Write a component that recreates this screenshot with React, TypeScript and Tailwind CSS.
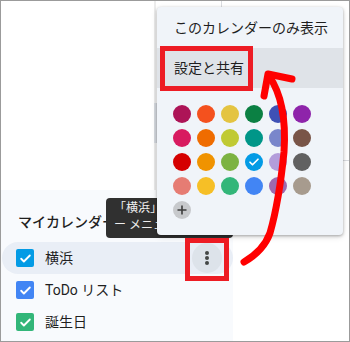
const FONT = 'font-["Roboto","Noto_Sans_CJK_JP",sans-serif]'

const SWATCHES = [
  ['#ad1457', '#f4511e', '#e4c441', '#0b8043', '#3f51b5', '#8e24aa'],
  ['#d81b60', '#ef6c00', '#c0ca33', '#009688', '#7986cb', '#795548'],
  ['#d50000', '#f09300', '#7cb342', '#039be5', '#b39ddb', '#616161'],
  ['#e67c73', '#f6bf26', '#33b679', '#4285f4', '#9e69af', '#a79b8e']
]

const CALENDARS = [
  { name: '横浜', color: '#039be5', active: true },
  { name: 'ToDo リスト', color: '#4285f4', active: false },
  { name: '誕生日', color: '#33b679', active: false }
]

function Check({ size = 12 }: { size?: number }) {
  return (
    <svg width={size} height={size} viewBox="0 0 24 24" fill="none">
      <path d="M4 12.5l5 5L20 6.5" stroke="white" strokeWidth="3.4" strokeLinecap="round" strokeLinejoin="round" />
    </svg>
  )
}

function ColorMenu() {
  return (
    <div className="absolute left-[156px] top-[6px] z-20 flex h-[228px] w-[186px] flex-col rounded-[4px] bg-[#f0f4f9] shadow-[0_1px_3px_rgba(0,0,0,0.3),0_2px_6px_rgba(0,0,0,0.12)]">
      <div className="flex h-[41px] items-center pl-[17px] pt-[1px] text-[14px] text-[#1f1f1f]">
        このカレンダーのみ表示
      </div>
      <div className="flex h-[40px] items-center bg-[#dfe3e8] pl-[17px] text-[14px] text-[#1f1f1f]">設定と共有</div>
      <div className="mt-[17px] flex flex-col gap-[6px] pl-[16px]">
        {SWATCHES.map((row, r) => (
          <div key={r} className="flex gap-[6px]">
            {row.map((c) => (
              <div
                key={c}
                className="flex h-[18px] w-[18px] items-center justify-center rounded-full"
                style={{ backgroundColor: c }}
              >
                {c === '#039be5' && <Check />}
              </div>
            ))}
          </div>
        ))}
        <div className="flex h-[18px] w-[18px] items-center justify-center rounded-full bg-[#c7c9cc]">
          <svg width="12" height="12" viewBox="0 0 12 12">
            <path d="M6 1.5v9M1.5 6h9" stroke="#3c3c3c" strokeWidth="1.6" />
          </svg>
        </div>
      </div>
    </div>
  )
}

export default function App() {
  return (
    <div className={`relative flex h-[342px] w-[350px] flex-col overflow-hidden border border-[#9b9b9b] bg-white ${FONT}`}>
      {/* calendar grid peeking out behind the menu */}
      <div className="absolute left-[153px] top-0 h-[189px] w-[2px] bg-[#ececec]" />
      <div className="absolute left-[153px] top-[102px] h-[40px] w-[3px] bg-[#d6dae0]" />
      <div className="absolute left-[220px] top-0 h-[8px] w-px bg-[#dadce0]" />
      <div className="absolute left-[340px] top-[159px] h-px w-[10px] bg-[#dadce0]" />

      <div className="h-[189px] shrink-0" />

      <div className="flex w-[232px] flex-1 flex-col bg-[#f8fafd]">
        <div className="mt-[22px] h-[20px] pl-[17px] text-[14px] font-medium leading-[20px] text-[#1f1f1f]">
          マイカレンダー
        </div>
        <div className="mt-[10px] flex flex-col">
          {CALENDARS.map((cal) => (
            <div
              key={cal.name}
              className={`ml-px flex h-[32px] items-center rounded-full pl-[14px] ${cal.active ? 'bg-[#e9eef6]' : ''}`}
            >
              <div
                className="flex h-[18px] w-[18px] items-center justify-center rounded-[2px]"
                style={{ backgroundColor: cal.color }}
              >
                <Check size={13} />
              </div>
              <span className="ml-[11px] text-[14px] text-[#1f1f1f]">{cal.name}</span>
              {cal.active && (
                <div className="ml-auto mr-[11px] flex h-[30px] w-[30px] flex-col items-center justify-center gap-px rounded-full bg-[#dde3ea]">
                  <span className="h-[4px] w-[4px] rounded-full bg-[#444746]" />
                  <span className="h-[4px] w-[4px] rounded-full bg-[#444746]" />
                  <span className="h-[4px] w-[4px] rounded-full bg-[#444746]" />
                </div>
              )}
            </div>
          ))}
        </div>
      </div>

      {/* tooltip for the overflow button */}
      <div className="absolute left-[105px] top-[197px] z-10 h-[40px] w-[127px] overflow-hidden rounded-[4px] bg-[#303030] pl-[8px] pt-[2px] text-[12px] leading-[17px] text-[#eeeeee]">
        <div className="whitespace-nowrap">「横浜」のオーバーフロ</div>
        <div className="whitespace-nowrap">ー メニュー</div>
      </div>

      <ColorMenu />

      {/* annotation marks */}
      <div className="absolute left-[159px] top-[45px] z-30 h-[45px] w-[93px] border-[5px] border-[#ed1c24]" />
      <div className="absolute left-[184px] top-[237px] z-30 h-[43px] w-[44px] border-[5px] border-[#ed1c24]" />
      <svg className="pointer-events-none absolute -left-px -top-px z-40" width="350" height="342" viewBox="0 0 350 342">
        <g fill="none" stroke="#ff0000" strokeWidth="7" strokeLinecap="round" strokeLinejoin="round">
          <path d="M244 262 C256 255 265 247 270 233 C276 212 281 182 284 152 C286 122 283 96 269 76" />
          <path d="M292 79 L268 74 L264 96" />
        </g>
      </svg>
    </div>
  )
}
